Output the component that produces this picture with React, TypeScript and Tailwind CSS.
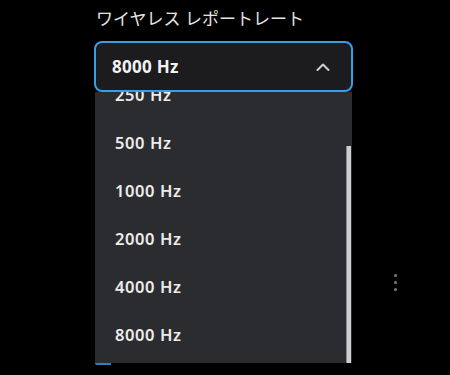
import { useState } from "react";

const rates = ["250 Hz", "500 Hz", "1000 Hz", "2000 Hz", "4000 Hz", "8000 Hz"];

const ChevronUp = () => (
  <svg width="14" height="8" viewBox="0 0 14 8" fill="none">
    <path d="M1.5 7 L7 1.5 L12.5 7" stroke="#d0d0d0" strokeWidth="2" strokeLinecap="round" strokeLinejoin="round" />
  </svg>
);

const ReportRateSelect = () => {
  const [value, setValue] = useState("8000 Hz");

  return (
    <div className="relative w-[259px]">
      <button
        type="button"
        className="flex h-[51px] w-full items-center justify-between rounded-[8px] border-2 border-[#3b9de3] bg-[#1c1c1e] pl-[16px] pr-[21px] text-[17px] font-bold text-[#f2f2f2]"
      >
        <span className="tracking-[0.3px]">{value}</span>
        <ChevronUp />
      </button>

      {/* open list, scrolled a little */}
      <div className="absolute left-[1px] top-full z-10 h-[271px] w-[257px] overflow-hidden bg-[#2b2c2f]">
        <ul className="-mt-[21px]">
          {rates.map((r) => (
            <li
              key={r}
              onClick={() => setValue(r)}
              className="flex h-[48px] cursor-pointer items-center pl-[20px] text-[16.5px] font-semibold tracking-[0.6px] text-[#ececec]"
            >
              {r}
            </li>
          ))}
        </ul>
        <div className="absolute right-[1px] top-[54px] h-[217px] w-[5px] border-l border-[#8a8a8a] bg-[#cfcfcf]" />
      </div>
    </div>
  );
};

export default function App() {
  return (
    <div
      className="h-[375px] w-[450px] overflow-hidden bg-black pl-[94px] pt-[6px]"
      style={{ fontFamily: '"Noto Sans", "Noto Sans CJK JP", sans-serif' }}
    >
      <h2 className="pl-[2px] text-[17px] font-normal leading-[26px] text-[#e4e4e4]">
        ワイヤレス レポートレート
      </h2>
      <div className="mt-[9px]">
        <ReportRateSelect />
      </div>

      {/* settings rows behind the open list */}
      <div className="mt-[182px] flex w-[303px] justify-end">
        <div className="flex flex-col gap-[4px]">
          <span className="h-[3px] w-[3px] rounded-full bg-[#7a7a7a]" />
          <span className="h-[3px] w-[3px] rounded-full bg-[#7a7a7a]" />
          <span className="h-[3px] w-[3px] rounded-full bg-[#7a7a7a]" />
        </div>
      </div>
      <div className="mt-[72px] ml-[1px] h-[2px] w-[16px] rounded-bl bg-[#2f7fc0]" />
    </div>
  );
}
